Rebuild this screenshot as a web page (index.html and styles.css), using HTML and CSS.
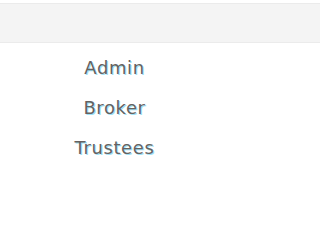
FILE: index.html
```html
<!DOCTYPE html>
<html>
<head>
<meta charset="utf-8">
<link rel="stylesheet" href="styles.css">
</head>
<body>
<header class="topbar"></header>
<nav class="menu">
  <a class="menu-item" href="#">Admin</a>
  <a class="menu-item" href="#">Broker</a>
  <a class="menu-item" href="#">Trustees</a>
</nav>
</body>
</html>
```
FILE: styles.css
```css
html, body {
  margin: 0;
  padding: 0;
  background: #ffffff;
}
body {
  padding-top: 3px;
}
.topbar {
  height: 38px;
  background: #f4f4f4;
  border-top: 1px solid #ebebeb;
  border-bottom: 1px solid #ebebeb;
}
.menu {
  width: 229px;
  display: flex;
  flex-direction: column;
  align-items: center;
  padding-top: 14px;
  gap: 18px;
}
.menu-item {
  font-family: "DejaVu Sans", sans-serif;
  font-size: 18px;
  line-height: 22px;
  letter-spacing: 0.6px;
  color: #666260;
  text-decoration: none;
  text-shadow: 1px 1px 0 #9fe2f6;
}
```
